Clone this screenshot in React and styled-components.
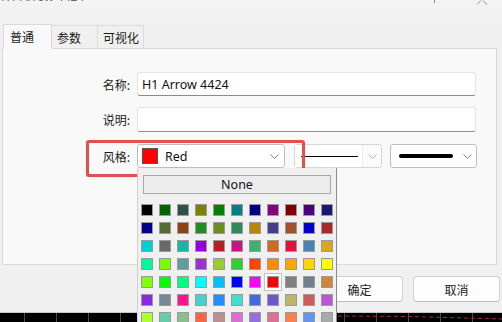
import React from "react";
import styled, { createGlobalStyle } from "styled-components";

const GlobalStyle = createGlobalStyle`
  html, body { margin: 0; padding: 0; }
  body {
    width: 502px; height: 322px; overflow: hidden; background: #000;
    font-family: "Noto Sans", "Noto Sans CJK SC", sans-serif;
  }
  * { box-sizing: border-box; }
`;

const UI = `"Noto Sans", "Noto Sans CJK SC", sans-serif`;
const CJK = `"Noto Sans CJK SC", "Noto Sans", sans-serif`;

const COLORS = [
  ["#000000","#006400","#2F4F4F","#808000","#008000","#008080","#000080","#800080","#800000","#4B0082","#191970"],
  ["#00008B","#556B2F","#8B4513","#228B22","#6B8E23","#2E8B57","#B8860B","#483D8B","#A0522D","#0000CD","#A52A2A"],
  ["#00CED1","#696969","#20B2AA","#9400D3","#B22222","#C71585","#3CB371","#D2691E","#DC143C","#4682B4","#DAA520"],
  ["#00FA9A","#7CFC00","#5F9EA0","#9932CC","#9ACD32","#32CD32","#FF4500","#FF8C00","#FFA500","#FFD700","#FFFF00"],
  ["#7FFF00","#00FF00","#00FF7F","#00FFFF","#00BFFF","#0000FF","#FF00FF","#FF0000","#808080","#708090","#CD853F"],
  ["#8A2BE2","#778899","#FF1493","#48D1CC","#1E90FF","#40E0D0","#4169E1","#6A5ACD","#BDB76B","#CD5C5C","#BA55D3"],
  ["#ADFF2F","#66CDAA","#8FBC8F","#FF6347","#BC8F8F","#DA70D6","#9370DB","#DB7093","#FF7F50","#6495ED","#A9A9A9"],
  ["#C0C0C0","#D2B48C","#DDA0DD","#F4A460","#FFB6C1","#B0C4DE","#87CEFA","#98FB98","#EEE8AA","#FFA07A","#D3D3D3"],
];

const Screen = styled.div`
  width: 502px; height: 322px;
  display: flex; flex-direction: column;
  position: relative; overflow: hidden;
`;

const Window = styled.div`
  height: 313px; flex: none;
  background: #f0f0f0;
  border-bottom: 1px solid #c8c8c8;
  display: flex; flex-direction: column;
  position: relative;
`;

const TitleBar = styled.div`
  height: 17px; flex: none;
  display: flex; align-items: flex-start;
  background: linear-gradient(#f4f4f4, #f1f1f1);
  overflow: hidden;
`;

const Title = styled.div`
  margin-top: -9px; margin-left: 1px;
  font-family: ${UI}; font-size: 12px; line-height: 12px; color: #666;
  flex: 1;
`;

const Controls = styled.div`
  display: flex; align-items: flex-start; gap: 40px;
  margin-right: 14px;
`;

const TabBar = styled.div`
  display: flex; align-items: flex-end;
  margin-top: 6px; padding-left: 3px;
  height: 25px; position: relative; z-index: 1;
`;

const Tab = styled.div`
  height: ${p => (p.$active ? 25 : 23)}px;
  width: ${p => p.$w}px;
  padding-left: ${p => (p.$active ? 6 : 5)}px;
  display: flex; align-items: center;
  font-family: ${CJK}; font-size: 12px; color: #1a1a1a;
  background: ${p => (p.$active ? "#f9f9f9" : "#f0f0f0")};
  border: 1px solid #dadada;
  border-bottom: ${p => (p.$active ? "1px solid #f9f9f9" : "none")};
  margin-bottom: ${p => (p.$active ? -1 : 0)}px;
  & + & { border-left: none; }
`;

const Panel = styled.div`
  margin-left: 2px; width: 495px; height: 217px;
  background: #f9f9f9;
  border: 1px solid #dadada;
  padding-top: 23px;
  display: flex; flex-direction: column;
`;

const FormRow = styled.div`
  display: flex; align-items: center;
  height: ${p => p.$h || 24}px;
  margin-bottom: ${p => p.$mb || 0}px;
  position: relative;
`;

const Label = styled.div`
  width: 127px; text-align: right;
  font-family: ${CJK}; font-size: 12px; color: #1a1a1a;
  margin-right: 7px;
`;

const TextBox = styled.div`
  width: 339px; height: 100%;
  background: #fff;
  border: 1px solid #e3e3e3;
  border-bottom: 1px solid #8a8a8a;
  border-radius: 3px;
  display: flex; align-items: center;
  padding-left: 4px;
  font-family: ${UI}; font-size: 12.5px; color: #111;
`;

const ComboWrap = styled.div`
  position: relative; height: 24px;
  margin-right: ${p => p.$mr || 0}px;
`;

const Combo = styled.div`
  width: ${p => p.$w}px; height: 24px;
  background: ${p => p.$dim ? "#fbfbfb" : "#fff"};
  border: 1px solid ${p => p.$dim ? "#d6d6d6" : "#bdbdbd"};
  border-radius: 3px;
  display: flex; align-items: center;
  padding-left: ${p => p.$pl ?? 4}px;
  font-family: ${UI}; font-size: 12.5px; color: #111;
`;

const Swatch = styled.div`
  width: 16px; height: 16px;
  background: ${p => p.$c};
  border: 1px solid #555;
  margin-right: 7px;
`;

const ComboText = styled.span`
  flex: 1;
`;

const LinePreview = styled.div`
  flex: 1; height: 100%;
  display: flex; align-items: center;
  padding: 0 ${p => p.$pr || 0}px 0 ${p => p.$pl || 0}px;
  background: ${p => p.$inner ? "#fff" : "transparent"};
  border-right: ${p => p.$inner ? "1px solid #ececec" : "none"};
`;

const Stroke = styled.div`
  width: ${p => p.$w}px; height: ${p => p.$t}px;
  background: #000; border-radius: ${p => p.$t / 2}px;
`;

const ChevronBox = styled.div`
  width: ${p => p.$w || 18}px; display: flex; justify-content: center; align-items: center;
`;

const Highlight = styled.div`
  position: absolute;
  left: 83px; top: -4px; width: 219px; height: 37px;
  border: 3px solid #e24f4f;
  border-radius: 3px;
  pointer-events: none;
  box-shadow: 0 0 1px rgba(226,79,79,0.5);
`;

const Popup = styled.div`
  position: absolute; left: 0; top: 24px; z-index: 5;
  width: 200px; height: 170px;
  background: #f0f0f0;
  border-left: 1px solid #d0d0d0;
  border-right: 1px solid #8c8c8c;
  padding-top: 7px;
`;

const NoneButton = styled.div`
  margin: 0 5px 0 5px; height: 19px;
  border: 1px solid #a8a8a8;
  background: #ececec;
  display: flex; align-items: center; justify-content: center;
  font-family: ${UI}; font-size: 12.5px; color: #111;
`;

const Grid = styled.div`
  display: grid; grid-template-columns: repeat(11, 18px);
  grid-auto-rows: 18px;
  margin-top: 7px;
`;

const Cell = styled.div`
  display: flex; align-items: center; justify-content: center;
  background: ${p => p.$sel ? "#fff" : "transparent"};
  border: 1px solid ${p => p.$sel ? "#c4c4c4" : "transparent"};
`;

const Chip = styled.div`
  width: 12px; height: 12px;
  background: ${p => p.$c};
  border: 1px solid #9a9a9a;
`;

const ButtonRow = styled.div`
  display: flex; justify-content: flex-end; gap: 10px;
  margin-top: 11px; padding-right: 2px;
`;

const Button = styled.div`
  width: 87px; height: 26px;
  background: #fdfdfd;
  border: 1px solid #d0d0d0;
  border-bottom-color: #bdbdbd;
  border-radius: 4px;
  display: flex; align-items: center; justify-content: center;
  font-family: ${CJK}; font-size: 12px; color: #1a1a1a;
`;

const Strip = styled.div`
  flex: 1; position: relative;
  background-color: #000;
  background-image: repeating-linear-gradient(90deg, transparent 0 24px, #4d4d4d 24px 25px, transparent 25px 32px);
`;

const StripLine = styled.svg`
  position: absolute; left: 0; top: 0;
`;

const Chevron = ({ color = "#555" }) => (
  <svg width="9" height="5" viewBox="0 0 9 5">
    <path d="M0.5 0.5 L4.5 4.5 L8.5 0.5" fill="none" stroke={color} strokeWidth="0.9" />
  </svg>
);

export default function App() {
  return (
    <>
      <GlobalStyle />
      <Screen>
        <Window>
          <TitleBar>
            <Title>H1 Arrow 4424</Title>
            <Controls>
              <svg width="2" height="4"><rect x="0" y="0" width="1" height="3" fill="#888" /></svg>
              <svg width="12" height="5" viewBox="0 0 12 5">
                <path d="M1 4.5 L5 0.5 M11 4.5 L7 0.5" stroke="#888" strokeWidth="1" fill="none" />
              </svg>
            </Controls>
          </TitleBar>
          <TabBar>
            <Tab $active $w={49}>普通</Tab>
            <Tab $w={46}>参数</Tab>
            <Tab $w={46}>可视化</Tab>
          </TabBar>
          <Panel>
            <FormRow $mb={11}>
              <Label>名称:</Label>
              <TextBox>H1 Arrow 4424</TextBox>
            </FormRow>
            <FormRow $h={25} $mb={12}>
              <Label>说明:</Label>
              <TextBox />
            </FormRow>
            <FormRow>
              <Label>风格:</Label>
              <ComboWrap $mr={9}>
                <Combo $w={148}>
                  <Swatch $c="#ff0000" />
                  <ComboText>Red</ComboText>
                  <ChevronBox $w={20}><Chevron color="#777" /></ChevronBox>
                </Combo>
                <Popup>
                  <NoneButton>None</NoneButton>
                  <Grid>
                    {COLORS.flat().map((c, i) => (
                      <Cell key={i} $sel={c === "#FF0000"}>
                        <Chip $c={c} />
                      </Cell>
                    ))}
                  </Grid>
                </Popup>
              </ComboWrap>
              <ComboWrap $mr={8}>
                <Combo $w={88} $dim $pl={0}>
                  <LinePreview $inner $pl={6} $pr={4}>
                    <Stroke $w={57} $t={1} />
                  </LinePreview>
                  <ChevronBox $w={19}><Chevron color="#b0b0b0" /></ChevronBox>
                </Combo>
              </ComboWrap>
              <ComboWrap>
                <Combo $w={87} $pl={8}>
                  <LinePreview>
                    <Stroke $w={54} $t={4} />
                  </LinePreview>
                  <ChevronBox $w={17}><Chevron color="#777" /></ChevronBox>
                </Combo>
              </ComboWrap>
              <Highlight />
            </FormRow>
          </Panel>
          <ButtonRow>
            <Button>确定</Button>
            <Button>取消</Button>
          </ButtonRow>
        </Window>
        <Strip>
          <StripLine width="502" height="9" viewBox="0 0 502 9">
            <polyline points="338,3 410,3.5 502,6" fill="none" stroke="#b02a2a" strokeWidth="1" strokeDasharray="4 3" />
          </StripLine>
        </Strip>
      </Screen>
    </>
  );
}
